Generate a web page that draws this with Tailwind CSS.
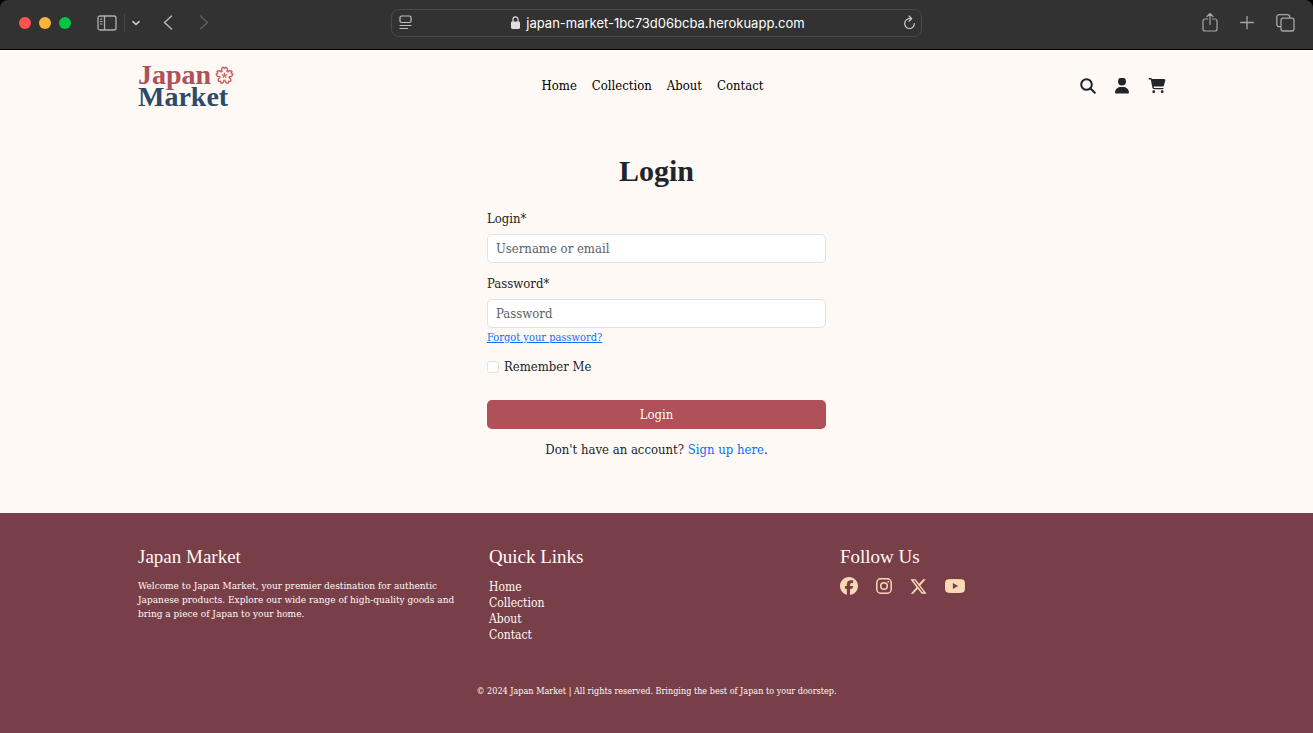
<!DOCTYPE html>
<html lang="en">
<head>
<meta charset="utf-8">
<meta name="viewport" content="width=device-width, initial-scale=1">
<title>Login | Japan Market</title>
<script src="https://cdn.jsdelivr.net/npm/@tailwindcss/browser@4"></script>
</head>
<body class="flex min-h-screen flex-col bg-black font-['DejaVu_Serif_Condensed','DejaVu_Serif',serif] text-[13px] leading-5 text-[#212529]">

<!-- Browser toolbar -->
<div class="grid h-[50px] shrink-0 grid-cols-[1fr_531px_1fr] items-center rounded-t-lg border-b border-black bg-[#323232] pb-1 font-['Inter',sans-serif]">
  <div class="flex items-center pl-[19px]">
    <div class="flex gap-2">
      <span class="size-3 rounded-full bg-[#ff544d]"></span>
      <span class="size-3 rounded-full bg-[#fdb43c]"></span>
      <span class="size-3 rounded-full bg-[#00c543]"></span>
    </div>
    <button type="button" aria-label="Show sidebar" class="ml-[26px]">
      <svg class="block h-4 w-5" viewBox="0 0 20 16" fill="none" stroke="#b0b0b0" stroke-width="1.3"><rect x="1" y="1" width="18" height="14" rx="2"/><path d="M7.500 1v14"/><path d="M3 4h2.500M3 6.500h2.500M3 9h2.500" stroke-width="1"/></svg>
    </button>
    <span class="ml-[7px] h-[18px] w-px bg-[#484848]"></span>
    <button type="button" aria-label="Tab groups" class="ml-[6px]">
      <svg class="block size-[10px]" viewBox="0 0 10 10" fill="none" stroke="#c8c8c8" stroke-width="1.700" stroke-linecap="round" stroke-linejoin="round"><path d="M2 3.700 5 6.500 8 3.700"/></svg>
    </button>
    <button type="button" aria-label="Back" class="ml-[22px]">
      <svg class="block h-4 w-[10px]" viewBox="0 0 10 16" fill="none" stroke="#b8b8b8" stroke-width="1.500" stroke-linecap="round" stroke-linejoin="round"><path d="M8.500 1 1.500 7.500l7 6.500"/></svg>
    </button>
    <button type="button" aria-label="Forward" class="ml-[26px]">
      <svg class="block h-4 w-[10px]" viewBox="0 0 10 16" fill="none" stroke="#5e5e5e" stroke-width="1.500" stroke-linecap="round" stroke-linejoin="round"><path d="M1.500 1 8.500 7.500l-7 6.500"/></svg>
    </button>
  </div>
  <div class="flex h-7 items-center justify-between rounded-lg border border-[#4a4a4a] pr-[6px] pl-[7px]">
    <button type="button" aria-label="Page menu">
      <svg class="block h-[15px] w-[13px]" viewBox="0 0 13 15" fill="none" stroke="#c0c0c0" stroke-width="1.200" stroke-linecap="round"><rect x="1" y="1" width="11" height="6.500" rx="1.500"/><path d="M1 10.500h11M1 13.500h7.500"/></svg>
    </button>
    <div class="flex items-center gap-[6px] text-[13px] text-white">
      <svg class="block h-[13px] w-[9px]" viewBox="0 0 9 13"><rect y="5.500" width="9" height="7.500" rx="1.400" fill="#dedede"/><path d="M2 6V3.500a2.500 2.700 0 0 1 5 0V6" fill="none" stroke="#dedede" stroke-width="1.200"/></svg>
      <span>japan-market-1bc73d06bcba.herokuapp.com</span>
    </div>
    <button type="button" aria-label="Reload">
      <svg class="block h-[15px] w-[11px]" viewBox="0 0 11 15" fill="none" stroke="#d0d0d0" stroke-width="1.200" stroke-linecap="round" stroke-linejoin="round"><path d="M7.500 3.700H5.500A4.800 4.900 0 1 0 10.300 8.600M5 1l2.700 2.700L5 6.400"/></svg>
    </button>
  </div>
  <div class="flex items-center justify-end gap-[22px] pr-[18px]">
    <button type="button" aria-label="Share">
      <svg class="block h-5 w-4" viewBox="0 0 16 20" fill="none" stroke="#a6a6a6" stroke-width="1.200" stroke-linecap="round" stroke-linejoin="round"><path d="M5.500 6H3a2 2 0 0 0-2 2v8a2 2 0 0 0 2 2h10a2 2 0 0 0 2-2V8a2 2 0 0 0-2-2h-2.500M8 11.500V1M5 3.500l3-3 3 3"/></svg>
    </button>
    <button type="button" aria-label="New tab">
      <svg class="block size-[14px]" viewBox="0 0 14 14" fill="none" stroke="#a6a6a6" stroke-width="1.300" stroke-linecap="round"><path d="M7 .2v12.600M.7 6.500h12.600"/></svg>
    </button>
    <button type="button" aria-label="Tab overview">
      <svg class="block h-[18px] w-[19px]" viewBox="0 0 19 18" fill="none" stroke="#a6a6a6" stroke-width="1.300" stroke-linejoin="round"><rect x="5" y="4.200" width="13" height="12.800" rx="2.200"/><path d="M4.800 12.700H3a2.200 2.200 0 0 1-2.200-2.200V2.900A2.200 2.200 0 0 1 3 .7h8.500a2.200 2.200 0 0 1 2.200 2.200V4"/></svg>
    </button>
  </div>
</div>

<header class="bg-[#fff9f5]">
  <div class="mx-auto grid h-[72px] max-w-[1053px] grid-cols-[1fr_auto_1fr] items-center px-2">
    <a href="#" class="flex w-fit flex-col font-['Liberation_Serif',serif] text-[28px] leading-[22px] font-bold">
      <span class="flex items-center gap-1 text-[#b05058]">Japan
        <svg class="size-[19px]" viewBox="0 0 20 20" fill="none" stroke="#cd5c64" stroke-width="1.500" stroke-linejoin="round">
          <g id="petal"><path d="M7.800 6C6.300 4.200 6.800 2 8.600 1.300L10 2.600l1.400-1.300c1.800.7 2.300 2.900.8 4.700"/><path d="M10 10V7" stroke-width="1.200"/></g>
          <use href="#petal" transform="rotate(72 10 10)"/><use href="#petal" transform="rotate(144 10 10)"/><use href="#petal" transform="rotate(216 10 10)"/><use href="#petal" transform="rotate(288 10 10)"/>
        </svg>
      </span>
      <span class="text-[#2d4a6a]">Market</span>
    </a>
    <nav class="flex gap-[15px] pr-2 text-black">
      <a href="#">Home</a><a href="#">Collection</a><a href="#">About</a><a href="#">Contact</a>
    </nav>
    <div class="flex items-center justify-end gap-[19px] pr-[9px]">
      <a href="#" aria-label="Search"><svg class="block size-4" viewBox="0 0 16 16" fill="none" stroke="#212529" stroke-width="2" stroke-linecap="round"><circle cx="6.500" cy="6.500" r="5.300"/><path d="m10.500 10.500 4.300 4.300"/></svg></a>
      <a href="#" aria-label="Account"><svg class="block h-4 w-[14px]" viewBox="0 16 448 512" fill="#212529"><path d="M224 256a128 128 0 1 0 0-256 128 128 0 1 0 0 256zm-45.700 48C79.800 304 0 383.800 0 482.300 0 498.700 13.300 512 29.700 512h388.600c16.400 0 29.700-13.300 29.700-29.700C448 383.800 368.200 304 269.700 304h-91.400z"/></svg></a>
      <a href="#" aria-label="Cart"><svg class="block h-4 w-[18px]" viewBox="0 0 576 544" fill="#212529"><path d="M0 24C0 10.700 10.700 0 24 0h45.500c22 0 41.500 12.800 50.600 32h411c26.300 0 45.500 25 38.600 50.400l-41 152.300c-8.500 31.400-37 53.300-69.500 53.300H170.700l5.400 28.500c2.200 11.300 12.100 19.500 23.600 19.500H488c13.300 0 24 10.700 24 24s-10.700 24-24 24H199.700c-34.600 0-64.300-24.600-70.700-58.500L77.400 54.500c-.7-3.800-4-6.500-7.900-6.500H24C10.700 48 0 37.300 0 24zm128 440a48 48 0 1 1 96 0 48 48 0 1 1-96 0zm336-48a48 48 0 1 1 0 96 48 48 0 1 1 0-96z"/></svg></a>
    </div>
  </div>
</header>

<main class="flex-1 bg-[#fff9f5] px-4 pt-[33px] pb-[49px]">
  <form class="mx-auto max-w-[339px]">
    <h1 class="text-center font-['Liberation_Serif',serif] text-[30px] leading-8 font-bold">Login</h1>
    <label for="login" class="mt-[22px] block">Login*</label>
    <input id="login" type="text" placeholder="Username or email" class="mt-[5px] block h-[29px] w-full rounded-[5px] border border-[#dee2e6] bg-white px-2 placeholder:text-[#5c6065]">
    <label for="password" class="mt-[11px] block">Password*</label>
    <input id="password" type="password" placeholder="Password" class="mt-[5px] block h-[29px] w-full rounded-[5px] border border-[#dee2e6] bg-white px-2 placeholder:text-[#5c6065]">
    <a href="#" class="block w-fit text-[11px] text-[#0d6efd] underline">Forgot your password?</a>
    <div class="mt-[9px] flex items-center gap-[5px]">
      <input id="remember" type="checkbox" class="size-3 appearance-none rounded-[3px] border border-[#dee2e6] bg-white checked:bg-[#0d6efd]">
      <label for="remember">Remember Me</label>
    </div>
    <button type="submit" class="mt-[23px] block h-[29px] w-full rounded-[5px] bg-[#b05058] text-[#fff9f5]">Login</button>
    <p class="mt-[11px] text-center">Don't have an account? <a href="#" class="text-[#0d6efd]">Sign up here</a>.</p>
  </form>
</main>

<footer class="bg-[#793f49] pt-8 pb-[34px] text-[#fff9f5]">
  <div class="mx-auto grid max-w-[1053px] grid-cols-3 gap-4 px-2">
    <section>
      <h2 class="font-['Liberation_Serif',serif] text-[19px] leading-6">Japan Market</h2>
      <p class="mt-[10px] text-[10px] leading-[14px]">Welcome to Japan Market, your premier destination for authentic Japanese products. Explore our wide range of high-quality goods and bring a piece of Japan to your home.</p>
    </section>
    <section>
      <h2 class="font-['Liberation_Serif',serif] text-[19px] leading-6">Quick Links</h2>
      <ul class="mt-[10px] text-[12px] leading-4">
        <li><a href="#">Home</a></li><li><a href="#">Collection</a></li><li><a href="#">About</a></li><li><a href="#">Contact</a></li>
      </ul>
    </section>
    <section>
      <h2 class="font-['Liberation_Serif',serif] text-[19px] leading-6">Follow Us</h2>
      <div class="mt-2 flex items-center gap-[18px] text-[#fad9b5]">
        <a href="#" aria-label="Facebook"><svg class="block size-[18px]" viewBox="0 0 512 512" fill="currentColor"><path d="M512 256C512 114.600 397.400 0 256 0S0 114.600 0 256c0 120 82.700 220.800 194.200 248.500V334.200h-52.800V256h52.800v-33.700c0-87.100 39.400-127.500 125-127.500 16.200 0 44.200 3.200 55.700 6.400V172c-6-.6-16.500-1-29.600-1-42 0-58.200 15.900-58.200 57.200V256h83.600l-14.400 78.200h-69.300v175.900C413.800 494.800 512 386.900 512 256z"/></svg></a>
        <a href="#" aria-label="Instagram"><svg class="block size-4" viewBox="0 0 16 16" fill="none" stroke="currentColor" stroke-width="1.500"><rect x=".8" y=".8" width="14.400" height="14.400" rx="4"/><circle cx="8" cy="8" r="3.300"/><circle cx="12.200" cy="3.800" r=".9" fill="currentColor" stroke="none"/></svg></a>
        <a href="#" aria-label="X"><svg class="block h-[15px] w-[17px]" viewBox="20 44 472 424" fill="currentColor"><path d="M389.200 48h70.600L305.600 224.200 487 464H345L233.700 318.600 106.500 464H35.800l164.900-188.500L26.800 48h145.600l100.500 132.900L389.200 48zm-24.800 373.800h39.100L151.100 88h-42l255.300 333.800z"/></svg></a>
        <a href="#" aria-label="YouTube"><svg class="block h-[14px] w-5" viewBox="0 0 19 14" preserveAspectRatio="none"><path d="M3 .3Q9.500-.3 16 .3q2.500.2 2.800 2.500.4 4.200 0 8.400-.3 2.300-2.800 2.500-6.500.6-13 0Q.5 13.500.2 11.200q-.4-4.200 0-8.400Q.5.500 3 .3z" fill="currentColor"/><path d="m7.500 4 5 3-5 3z" fill="#793f49"/></svg></a>
      </div>
    </section>
  </div>
  <p class="mt-10 text-center text-[9px] leading-4">© 2024 Japan Market | All rights reserved. Bringing the best of Japan to your doorstep.</p>
</footer>
</body>
</html>
